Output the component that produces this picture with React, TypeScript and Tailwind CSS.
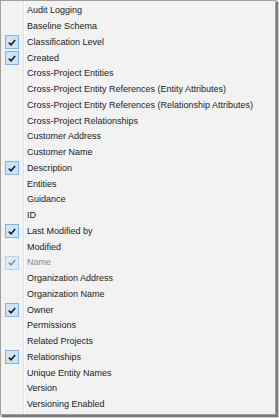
import React from 'react';

type Item = { label: string; checked?: boolean; disabled?: boolean };

const items: Item[] = [
    { label: 'Audit Logging' },
    { label: 'Baseline Schema' },
    { label: 'Classification Level', checked: true },
    { label: 'Created', checked: true },
    { label: 'Cross-Project Entities' },
    { label: 'Cross-Project Entity References (Entity Attributes)' },
    { label: 'Cross-Project Entity References (Relationship Attributes)' },
    { label: 'Cross-Project Relationships' },
    { label: 'Customer Address' },
    { label: 'Customer Name' },
    { label: 'Description', checked: true },
    { label: 'Entities' },
    { label: 'Guidance' },
    { label: 'ID' },
    { label: 'Last Modified by', checked: true },
    { label: 'Modified' },
    { label: 'Name', checked: true, disabled: true },
    { label: 'Organization Address' },
    { label: 'Organization Name' },
    { label: 'Owner', checked: true },
    { label: 'Permissions' },
    { label: 'Related Projects' },
    { label: 'Relationships', checked: true },
    { label: 'Unique Entity Names' },
    { label: 'Version' },
    { label: 'Versioning Enabled' },
];

const Check: React.FC<{ disabled?: boolean }> = ({ disabled }) => (
    <div
        className={
            disabled
                ? 'w-[14px] h-[14px] flex items-center justify-center bg-[#dcebf7] border border-[#b3d4ef]'
                : 'w-[14px] h-[14px] flex items-center justify-center bg-[#cce4f7] border border-[#7fb6e6]'
        }
    >
        <svg width="8" height="7" viewBox="0 0 8 7">
            <path d="M0.8 3.6 L3 5.8 L7.2 0.9" fill="none" stroke={disabled ? '#8d8d8d' : '#1a1a1a'} strokeWidth="1.5" />
        </svg>
    </div>
);

export default function App() {
    return (
        <div className="w-[279px] h-[418px] bg-[#dedede] overflow-hidden">
            <div
                className="relative w-[276px] h-[415px] bg-[#f2f2f2] border border-[#a0a0a0] shadow-[2px_2px_1px_rgba(0,0,0,0.45)] pt-[2px]"
                style={{ fontFamily: '"Liberation Sans", Arial, sans-serif' }}
            >
                <div className="absolute top-0 bottom-0 left-[22px] w-px bg-[#e2e2e2]" />
                <div className="absolute top-0 bottom-0 left-[23px] w-px bg-white" />
                {items.map(item => (
                    <div key={item.label} className="h-[15.76px] flex items-center">
                        <div className="w-[26px] pl-[4px] flex items-center">
                            {item.checked && <Check disabled={item.disabled} />}
                        </div>
                        <span
                            className={
                                item.disabled
                                    ? 'text-[9px] leading-none text-[#8a8a8a] whitespace-nowrap'
                                    : 'text-[9px] leading-none text-[#1a1a1a] whitespace-nowrap'
                            }
                        >
                            {item.label}
                        </span>
                    </div>
                ))}
            </div>
        </div>
    );
}
